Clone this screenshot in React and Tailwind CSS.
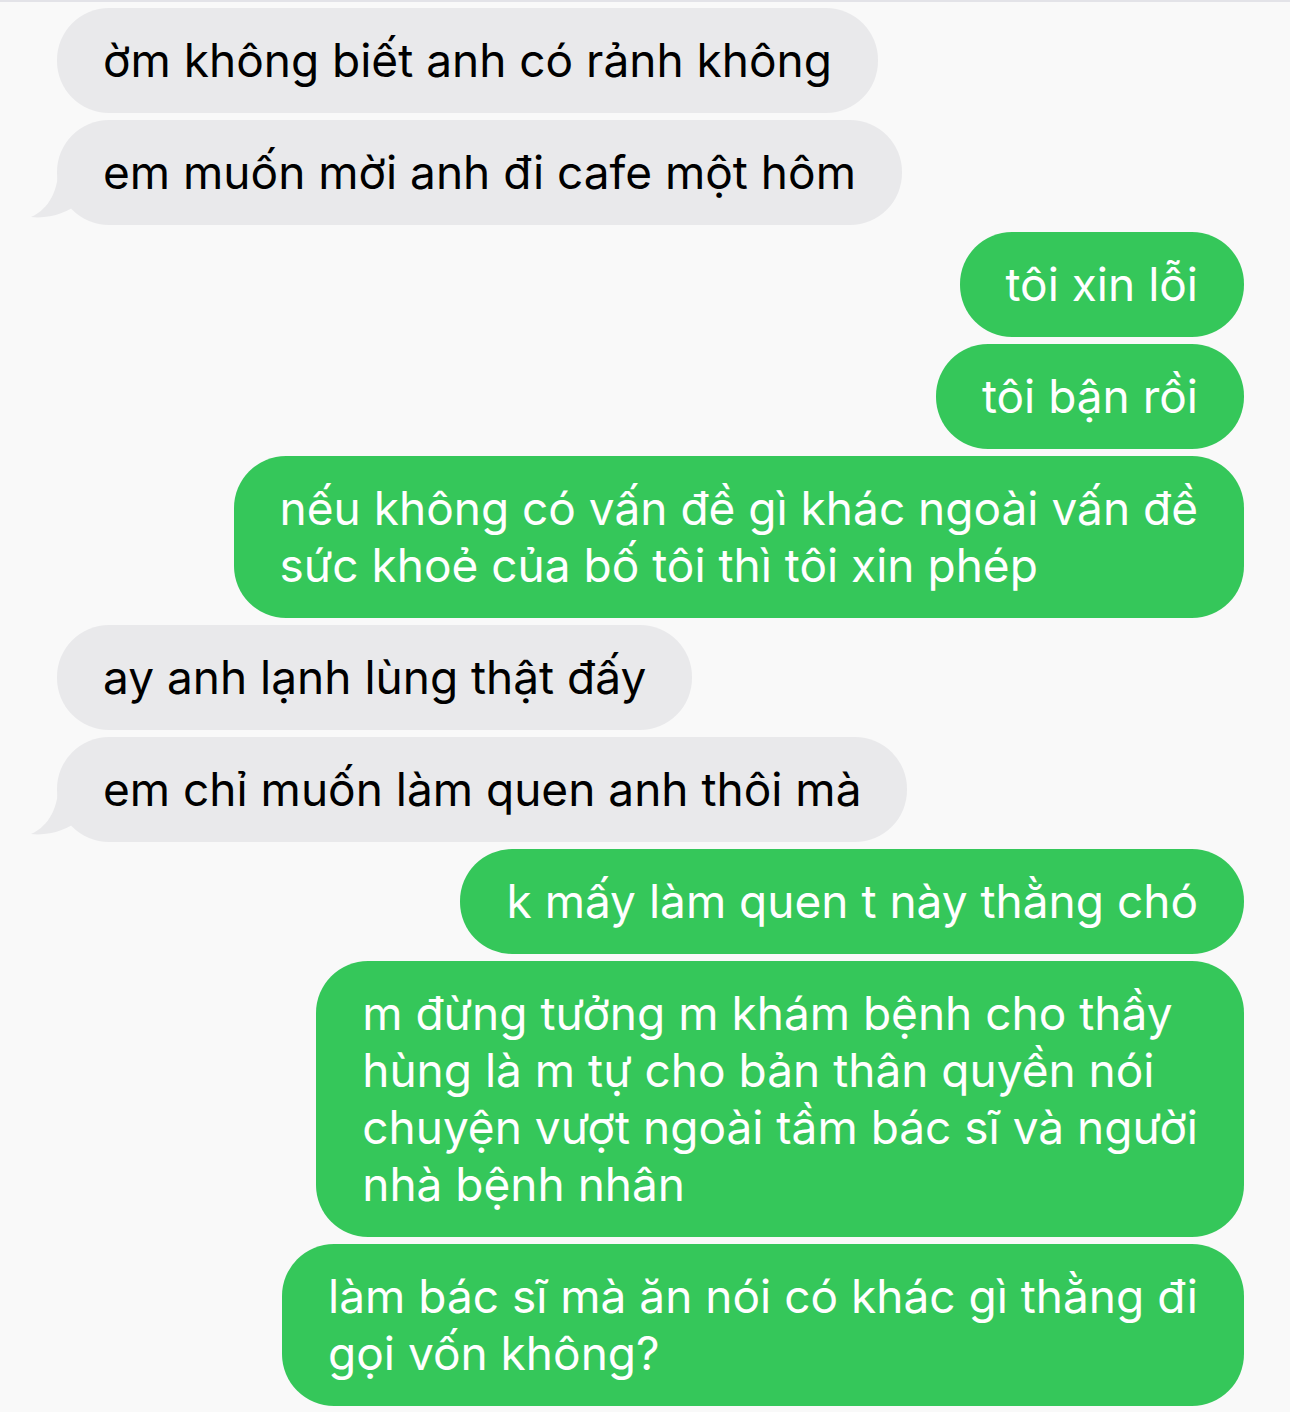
import React from "react";

const msgs = [
  { me: false, t: "ờm không biết anh có rảnh không" },
  { me: false, t: "em muốn mời anh đi cafe một hôm", tail: true },
  { me: true, t: "tôi xin lỗi" },
  { me: true, t: "tôi bận rồi" },
  { me: true, t: ["nếu không có vấn đề gì khác ngoài vấn đề", "sức khoẻ của bố tôi thì tôi xin phép"] },
  { me: false, t: "ay anh lạnh lùng thật đấy" },
  { me: false, t: "em chỉ muốn làm quen anh thôi mà", tail: true },
  { me: true, t: "k mấy làm quen t này thằng chó" },
  { me: true, t: ["m đừng tưởng m khám bệnh cho thầy", "hùng là m tự cho bản thân quyền nói", "chuyện vượt ngoài tầm bác sĩ và người", "nhà bệnh nhân"] },
  { me: true, t: ["làm bác sĩ mà ăn nói có khác gì thằng đi", "gọi vốn không?"] },
];

function Tail() {
  return (
    <svg className="absolute left-[-28px] bottom-[4px]" width="60" height="60" viewBox="0 0 60 60">
      <path d="M30 0 C30 30 20 48 2 56 C20 58 40 52 52 40 L60 40 L60 0 Z" fill="#e9e9eb" />
    </svg>
  );
}

export default function App() {
  return (
    <div className="w-[1290px] h-[1412px] bg-[#f9f9f9] overflow-hidden" style={{ fontFamily: "Inter, 'Noto Sans', sans-serif" }}>
      <div className="h-[2px] bg-[#e3e3e8]" />
      <div className="flex flex-col gap-[7px] pt-[6px] pl-[57px] pr-[46px]">
        {msgs.map((m, i) => (
          <div key={i} className={m.me ? "flex justify-end" : "flex justify-start"}>
            <div
              className={
                "relative rounded-[52px] px-[46px] py-[24px] text-[46px] leading-[57px] " +
                (m.me ? "bg-[#35c75a] text-white" : "bg-[#e9e9eb] text-black")
              }
            >
              {m.tail && <Tail />}
              <div className="relative whitespace-nowrap">
                {Array.isArray(m.t) ? m.t.map((l, j) => <div key={j}>{l}</div>) : m.t}
              </div>
            </div>
          </div>
        ))}
      </div>
    </div>
  );
}
